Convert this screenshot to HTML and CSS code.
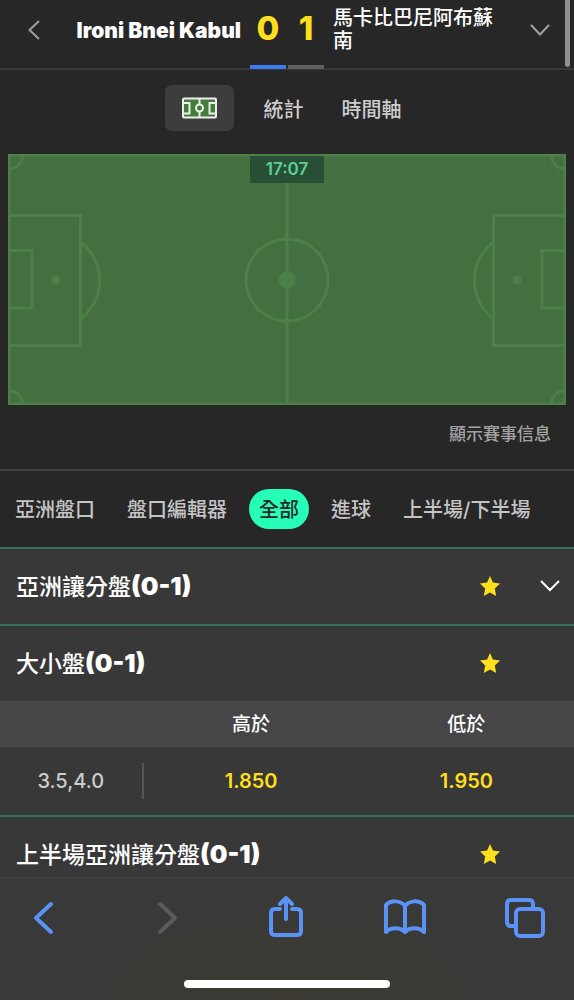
FILE: index.html
```html
<!DOCTYPE html>
<html lang="zh-Hant">
<head>
<meta charset="utf-8">
<meta name="viewport" content="width=device-width, initial-scale=1">
<title>Ironi Bnei Kabul 0 - 1</title>
<link rel="stylesheet" href="styles.css">
</head>
<body>
<div class="app">
  <main class="page">
    <header class="match">
      <div class="side side-home">
        <button class="nav" type="button" aria-label="返回">
          <svg width="12" height="20" viewBox="0 0 12 20"><path class="thin" d="M11 1L1.500 10L11 19"/></svg>
        </button>
        <span class="team home">Ironi Bnei Kabul</span>
      </div>
      <div class="score">
        <span class="goals leading">0</span>
        <span class="goals">1</span>
      </div>
      <div class="side side-away">
        <span class="team away">馬卡比巴尼阿布蘇南</span>
        <button class="nav" type="button" aria-label="展開">
          <svg width="20" height="12" viewBox="0 0 20 12"><path class="thin" d="M1 1L10 10.500L19 1"/></svg>
        </button>
      </div>
    </header>

    <nav class="views">
      <button class="view view-on" type="button" aria-label="球場">
        <svg width="35" height="22" viewBox="0 0 35 22">
          <rect class="mini-pitch" x="1" y="1.500" width="33" height="19" rx="1"/>
          <path class="mini-line" d="M17.500 1.500V7.500M17.500 14.500V20.500M1 6H7.500V16.500H1M34 6H27.500V16.500H34"/>
          <circle class="mini-line" cx="17.500" cy="11" r="3.500"/>
        </svg>
      </button>
      <button class="view" type="button">統計</button>
      <button class="view" type="button">時間軸</button>
    </nav>

    <section class="field">
      <svg class="pitch" viewBox="0 0 558 251">
        <rect class="grass" x="0" y="0" width="558" height="251"/>
        <g class="chalk">
          <rect x="1" y="1" width="556" height="249"/>
          <path d="M279 1V250"/>
          <circle cx="279" cy="126" r="41"/>
          <path d="M2 61.500H72.500V191.500H2M2 96.500H24V154H2M73 88.500A48 48 0 0 1 73 164.500"/>
          <path d="M556 61.500H485.500V191.500H556M556 96.500H534V154H556M485 88.500A48 48 0 0 0 485 164.500"/>
          <path d="M14.500 2A12.500 12.500 0 0 1 2 14.500M543.500 2A12.500 12.500 0 0 0 556 14.500M2 237A12.500 12.500 0 0 1 14.500 249M556 237A12.500 12.500 0 0 0 543.500 249"/>
        </g>
        <g class="spot">
          <circle cx="279" cy="126" r="8.500"/>
          <circle cx="47.500" cy="126" r="4.500"/>
          <circle cx="509" cy="126" r="4.500"/>
        </g>
      </svg>
      <time class="clock">17:07</time>
    </section>
    <div class="info"><button class="info-link" type="button">顯示賽事信息</button></div>

    <nav class="filters">
      <button class="filter" type="button">亞洲盤口</button>
      <button class="filter" type="button">盤口編輯器</button>
      <button class="filter filter-on" type="button">全部</button>
      <button class="filter" type="button">進球</button>
      <button class="filter" type="button">上半場/下半場</button>
    </nav>

    <section class="market">
      <div class="market-head">
        <h2 class="title">亞洲讓分盤<b>(0-1)</b></h2>
        <button class="star" type="button" aria-label="收藏"><svg width="20" height="20" viewBox="0 0 20 20"><path d="M10 0L12.900 6.600L20 7.500L14.800 12.400L16.200 20L10 16.500L3.800 20L5.200 12.400L0 7.500L7.100 6.600Z"/></svg></button>
        <button class="fold" type="button" aria-label="展開"><svg width="20" height="12" viewBox="0 0 20 12"><path d="M1 1L10 10L19 1"/></svg></button>
      </div>
    </section>

    <section class="market">
      <div class="market-head">
        <h2 class="title">大小盤<b>(0-1)</b></h2>
        <button class="star" type="button" aria-label="收藏"><svg width="20" height="20" viewBox="0 0 20 20"><path d="M10 0L12.900 6.600L20 7.500L14.800 12.400L16.200 20L10 16.500L3.800 20L5.200 12.400L0 7.500L7.100 6.600Z"/></svg></button>
        <span class="fold"></span>
      </div>
      <table class="odds">
        <thead>
          <tr><td class="col-line"></td><th scope="col">高於</th><th scope="col">低於</th></tr>
        </thead>
        <tbody>
          <tr>
            <th class="line" scope="row"><span class="line-value">3.5,4.0</span></th>
            <td><button class="price" type="button">1.850</button></td>
            <td><button class="price" type="button">1.950</button></td>
          </tr>
        </tbody>
      </table>
    </section>

    <section class="market">
      <div class="market-head">
        <h2 class="title">上半場亞洲讓分盤<b>(0-1)</b></h2>
        <button class="star" type="button" aria-label="收藏"><svg width="20" height="20" viewBox="0 0 20 20"><path d="M10 0L12.900 6.600L20 7.500L14.800 12.400L16.200 20L10 16.500L3.800 20L5.200 12.400L0 7.500L7.100 6.600Z"/></svg></button>
        <span class="fold"></span>
      </div>
    </section>
  </main>

  <footer class="browser">
    <div class="tools">
      <button class="tool" type="button" aria-label="上一頁"><svg viewBox="0 0 44 44"><path d="M29 8L14 22L29 36"/></svg></button>
      <button class="tool" type="button" aria-label="下一頁" disabled><svg viewBox="0 0 44 44"><path d="M18 8L33 22L18 36"/></svg></button>
      <button class="tool" type="button" aria-label="分享"><svg viewBox="0 0 44 44"><path d="M17 13H12Q8 13 8 17V35Q8 39 12 39H34Q38 39 38 35V17Q38 13 34 13H29M23 23V2M17 8L23 2L29 8"/></svg></button>
      <button class="tool" type="button" aria-label="書籤"><svg viewBox="0 0 44 44"><path d="M22 10C17 4 8 4 3 9V36C8 31 17 31 22 36C27 31 36 31 41 36V9C36 4 27 4 22 10V36"/></svg></button>
      <button class="tool" type="button" aria-label="分頁"><svg viewBox="0 0 44 44"><path d="M12 30H8Q4 30 4 26V8Q4 4 8 4H26Q30 4 30 8V12"/><rect x="13" y="13" width="27" height="27" rx="4"/></svg></button>
    </div>
    <div class="home-bar"></div>
  </footer>
  <div class="scroll-thumb"></div>
</div>
</body>
</html>
```

FILE: styles.css
```css
* {
  box-sizing: border-box;
}

body {
  margin: 0;
  background: #272727;
  color: #fff;
  font-family: Inter, "Noto Sans CJK TC", sans-serif;
  font-size: 20px;
}

button {
  padding: 0;
  border: 0;
  background: none;
  color: inherit;
  font: inherit;
  white-space: nowrap;
}

svg {
  display: block;
  fill: none;
}

.app {
  position: relative;
  display: flex;
  flex-direction: column;
  height: 100vh;
}

.page {
  flex: 1;
  min-height: 0;
  overflow-y: auto;
  scrollbar-width: none;
}

/* Match header */
.match {
  display: grid;
  grid-template-columns: 1fr 74px 1fr;
  gap: 9px;
  height: 70px;
  border-bottom: 2px solid #3a3a3a;
}

.side {
  display: flex;
  align-items: center;
  justify-content: space-between;
  padding-bottom: 8px;
}

.side-home {
  padding-left: 14px;
}

.side-away {
  padding-right: 14px;
}

.nav {
  display: grid;
  place-items: center;
  flex: none;
  width: 40px;
  height: 40px;
}

.thin {
  stroke: #a0a0a0;
  stroke-width: 2;
}

.team {
  line-height: 23px;
}

.home {
  font-size: 21px;
  font-weight: 900;
}

.away {
  max-width: 170px;
  font-weight: 500;
}

.score {
  display: grid;
  grid-template-columns: 1fr 1fr;
  gap: 2px;
  margin-bottom: -1px;
}

.goals {
  border-bottom: 4px solid #5f5f5f;
  color: #ffdf1b;
  font-size: 33px;
  font-weight: 800;
  line-height: 56px;
  text-align: center;
}

.leading {
  border-color: #3b7cf0;
}

/* View switch */
.views {
  display: flex;
  justify-content: center;
  gap: 22px;
  padding: 15px 0 23px;
}

.view {
  height: 46px;
  padding: 0 8px;
  color: #ccc;
  font-weight: 500;
}

.view-on {
  padding: 0 17px;
  border-radius: 7px;
  background: #3d3d3d;
}

.mini-pitch {
  fill: #467b3e;
  stroke: #eee;
  stroke-width: 2;
}

.mini-line {
  stroke: #eee;
  stroke-width: 2;
}

/* Pitch */
.field {
  position: relative;
  margin: 0 8px;
}

.pitch {
  width: 100%;
}

.grass {
  fill: #446f41;
}

.chalk {
  stroke: #4d8049;
  stroke-width: 3;
}

.spot {
  fill: #4d8049;
}

.clock {
  position: absolute;
  top: 2px;
  left: 50%;
  width: 74px;
  margin-left: -37px;
  background: #284f35;
  color: #5bd193;
  font-size: 17px;
  font-weight: 600;
  line-height: 27px;
  text-align: center;
}

.info {
  padding: 16px 23px 22px;
  border-bottom: 2px solid #424242;
  text-align: right;
}

.info-link {
  display: inline-block;
  color: #a3a3a3;
  font-size: 17px;
  font-weight: 500;
  line-height: 26px;
  vertical-align: top;
}

/* Market filters */
.filters {
  display: flex;
  gap: 12px;
  padding: 18px 5px;
}

.filter {
  height: 40px;
  padding: 0 10px 2px;
  color: #c4c4c4;
  font-weight: 500;
}

.filter-on {
  border-radius: 20px;
  background: #27ffb9;
  color: #272727;
}

/* Markets */
.market {
  border-top: 2px solid #386f58;
  background: #383838;
}

.market-head {
  display: flex;
  align-items: center;
  height: 75px;
  padding: 0 14px 2px 16px;
}

.title {
  flex: 1;
  margin: 0;
  padding-top: 2px;
  font-size: 23px;
  font-weight: 500;
  line-height: 32px;
}

.title b {
  font-size: 25px;
  font-weight: 900;
}

.star {
  fill: #ffdf1b;
}

.star svg {
  fill: inherit;
}

.fold {
  display: grid;
  justify-content: end;
  width: 60px;
}

.fold path {
  stroke: #fff;
  stroke-width: 2;
}

.odds {
  width: 100%;
  border-collapse: collapse;
  table-layout: fixed;
}

.odds th,
.odds td {
  height: 68px;
  padding: 0;
  font-weight: 500;
  text-align: center;
}

.odds thead th,
.odds thead td {
  height: 46px;
  padding-bottom: 4px;
  background: #464646;
  font-size: 19px;
}

.odds .col-line {
  width: 25%;
}

.odds .line {
  color: #ccc;
}

.line-value {
  display: block;
  border-right: 2px solid #555;
  line-height: 36px;
}

.price {
  color: #ffdf1b;
  font-weight: 600;
}

/* Browser toolbar */
.browser {
  height: 123px;
  border-top: 1px solid #404040;
  background: radial-gradient(ellipse at 50% 100%, #3c3a33, #393939 70%);
}

.tools {
  display: flex;
  justify-content: space-between;
  padding: 18px 27px 0 22px;
}

.tool {
  width: 44px;
  height: 44px;
  stroke: #5b92f5;
  stroke-width: 4;
  stroke-linecap: round;
  stroke-linejoin: round;
}

.tool:disabled {
  stroke: #5b5b5b;
}

.home-bar {
  width: 36%;
  height: 8px;
  margin: 40px auto 0;
  border-radius: 4px;
  background: #fff;
}

.scroll-thumb {
  position: absolute;
  top: 0;
  right: 4px;
  width: 5px;
  height: 67px;
  border-radius: 0 0 3px 3px;
  background: #909090;
}
```
